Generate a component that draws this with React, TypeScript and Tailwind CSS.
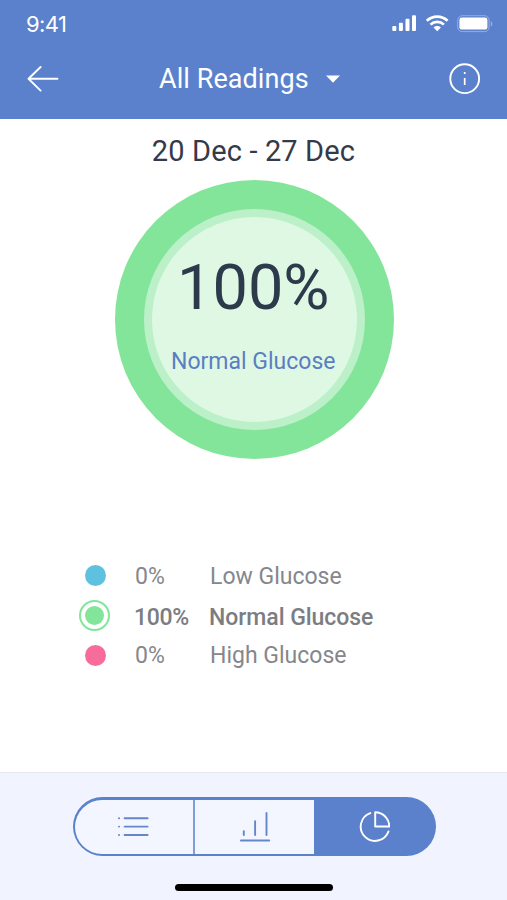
import { useState } from "react";
import type { ReactNode } from "react";

type TabId = "list" | "bars" | "pie";

type Reading = {
  id: string;
  percent: string;
  label: string;
  dotClass: string;
};

const READINGS: Reading[] = [
  { id: "low", percent: "0%", label: "Low Glucose", dotClass: "bg-[#5fc1e0]" },
  { id: "normal", percent: "100%", label: "Normal Glucose", dotClass: "bg-[#83e59a]" },
  { id: "high", percent: "0%", label: "High Glucose", dotClass: "bg-[#f76c9a]" },
];

const TABS: { id: TabId; label: string; className: string; icon: ReactNode }[] = [
  { id: "list", label: "List", className: "w-[118px] rounded-l-full", icon: <ListIcon /> },
  { id: "bars", label: "Bar chart", className: "w-[121px] border-l-2 border-[#7f9dd6]", icon: <BarsIcon /> },
  { id: "pie", label: "Pie chart", className: "flex-1 rounded-r-full", icon: <PieIcon /> },
];

function ListIcon() {
  return (
    <svg width="32" height="32" viewBox="0 0 32 32" fill="none" stroke="currentColor" strokeWidth="1.9" strokeLinecap="round">
      <path d="M6.6 7.3h23M6.6 15.6h23M6.6 24h23M1 7.3h.1M1 15.6h.1M1 24h.1" />
    </svg>
  );
}

function BarsIcon() {
  return (
    <svg width="32" height="32" viewBox="0 0 32 32" fill="none" stroke="currentColor" strokeWidth="1.9" strokeLinecap="round">
      <path d="M1.9 29.5h28.3M4.8 20.1v4M16.1 10.3v13.8M27.5 1.9v22.2" />
    </svg>
  );
}

function PieIcon() {
  return (
    <svg width="32" height="32" viewBox="0 0 32 32" fill="none" stroke="currentColor" strokeWidth="1.9" strokeLinejoin="round" strokeLinecap="round">
      <path d="M12.3 2.1A14.3 14.3 0 1 0 30.5 20.4" />
      <path d="M17.2 1.2v14.3h14.1A14.3 14.3 0 0 0 17.2 1.2Z" />
    </svg>
  );
}

function StatusIcons() {
  return (
    <svg width="102" height="18" viewBox="0 0 102 18" fill="white">
      {/* Signal */}
      <rect x="0.3" y="11" width="4" height="5" rx="1" />
      <rect x="6.9" y="7.8" width="4" height="8.2" rx="1" />
      <rect x="13.5" y="3.8" width="4" height="12.2" rx="1" />
      <rect x="20" y="0.3" width="4" height="15.7" rx="1" />
      {/* Wifi */}
      <g fill="none" stroke="white" strokeWidth="2.7">
        <path d="M34.8 5.8a15 15 0 0 1 20.8 0" />
        <path d="M38.5 9.6a9.6 9.6 0 0 1 13.4 0" />
      </g>
      <path d="M41.5 12.5a5.4 5.4 0 0 1 7.4 0l-3.7 3.7z" />
      {/* Battery */}
      <rect x="65.7" y="0.7" width="31.4" height="15.9" rx="4.6" fill="none" stroke="white" strokeOpacity="0.35" />
      <rect x="67.4" y="2.6" width="28" height="12" rx="2.4" />
      <path d="M98.8 6.2c2 .8 2 4.4 0 5.2z" fillOpacity="0.4" />
    </svg>
  );
}

function Header() {
  return (
    <header className="h-[118.5px] bg-[#5b81cc] text-white">
      <div className="flex h-12 items-center justify-between pl-[26px] pr-[13px]">
        <span className="font-['Inter',sans-serif] text-[22px] tracking-[-0.6px]">9:41</span>
        <StatusIcons />
      </div>
      <div className="flex h-[62px] items-center pl-[27px] pr-[26px]">
        <button type="button" aria-label="Back">
          <svg width="32" height="28" viewBox="0 0 32 28" fill="none" stroke="currentColor" strokeWidth="1.9" strokeLinecap="round" strokeLinejoin="round">
            <path d="M30.5 13.8H1.5M13.6 2 1.5 13.8 13.6 25.6" />
          </svg>
        </button>
        <button type="button" className="ml-[100px] flex items-center gap-[17px]">
          <span className="text-[27px] tracking-[0.07px]">All Readings</span>
          <svg width="14" height="8" viewBox="0 0 14 8" fill="currentColor">
            <path d="M0 .4h14L7 7.8z" />
          </svg>
        </button>
        <button type="button" aria-label="Info" className="ml-auto">
          <svg width="32" height="32" viewBox="0 0 32 32" fill="none" stroke="currentColor" strokeWidth="1.9">
            <circle cx="15.7" cy="15.7" r="14.4" />
            <path d="M15.7 14.9v7M15.7 8.9v2" strokeWidth="1.7" />
          </svg>
        </button>
      </div>
    </header>
  );
}

function GlucoseRing() {
  return (
    <div className="mt-[9px] ml-[115px] size-[279px] rounded-full bg-[#83e59a] p-[29px]">
      <div className="flex size-full flex-col items-center rounded-full border-[8.5px] border-[#bbf0c8] bg-[#dff8e3] pr-[2.5px]">
        <span className="mt-[31px] text-[63px] leading-[80px] text-[#2d3a4b]">100%</span>
        <span className="mt-[19px] text-[23px] leading-[30px] text-[#5b7dc4]">Normal Glucose</span>
      </div>
    </div>
  );
}

function Legend({ selected, onSelect }: { selected: string; onSelect: (id: string) => void }) {
  return (
    <ul className="mt-[97.6px] pl-[79px] text-[23px] text-[#85878b]">
      {READINGS.map((reading) => {
        const active = reading.id === selected;
        return (
          <li key={reading.id}>
            <button type="button" onClick={() => onSelect(reading.id)} className="flex h-[39.8px] items-center text-left">
              {active ? (
                <span className="flex size-[31px] items-center justify-center rounded-full border-2 border-[#83e59a]">
                  <span className={`size-[19px] rounded-full ${reading.dotClass}`} />
                </span>
              ) : (
                <span className="flex w-[33px] justify-center">
                  <span className={`size-[21px] rounded-full ${reading.dotClass}`} />
                </span>
              )}
              <span
                className={
                  active ? "ml-6 w-[75px] pt-1 font-medium tracking-[-0.3px] text-[#7b7d82]" : "ml-[23px] w-[75px] pt-0.5"
                }
              >
                {reading.percent}
              </span>
              <span className={active ? "pt-1 font-medium tracking-[-0.05px] text-[#7b7d82]" : "pt-0.5"}>
                {reading.label}
              </span>
            </button>
          </li>
        );
      })}
    </ul>
  );
}

export default function App() {
  const [activeTab, setActiveTab] = useState<TabId>("pie");
  const [selected, setSelected] = useState("normal");

  return (
    <div className="flex h-[900px] w-[507px] flex-col overflow-hidden bg-white font-['Roboto',sans-serif]">
      <Header />

      <main className="flex-1">
        <h1 className="mt-[13px] mb-[10px] text-center text-[29px] leading-[38px] tracking-[0.14px] text-[#353a48]">
          20 Dec - 27 Dec
        </h1>
        <GlucoseRing />
        <Legend selected={selected} onSelect={setSelected} />
      </main>

      {/* View switcher */}
      <footer className="flex h-32 flex-col items-center border-t border-[#e3eaf4] bg-[#f1f4fe]">
        <nav className="mt-6 ml-px flex h-[59px] w-[363px] rounded-full bg-[#5b81cc] p-[2.5px]">
          {TABS.map((tab) => (
            <button
              key={tab.id}
              type="button"
              aria-label={tab.label}
              onClick={() => setActiveTab(tab.id)}
              className={`flex items-center justify-center ${tab.className} ${
                activeTab === tab.id ? "bg-[#5b81cc] text-white" : "bg-[#f3f6ff] text-[#6486cb]"
              }`}
            >
              {tab.icon}
            </button>
          ))}
        </nav>
        <div className="mt-7 h-[7px] w-[158px] rounded-full bg-black" />
      </footer>
    </div>
  );
}
